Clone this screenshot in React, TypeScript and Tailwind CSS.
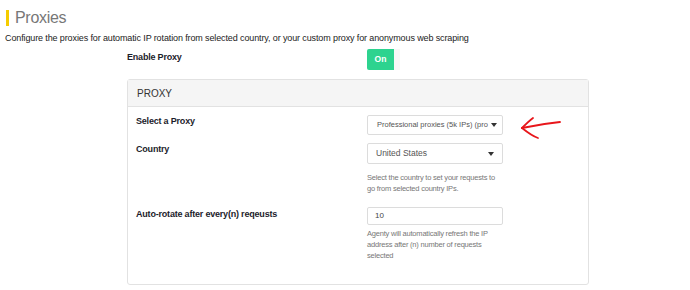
import React from 'react';

function Caret() {
  return (
    <svg width="6" height="4" viewBox="0 0 6 4" className="shrink-0">
      <path d="M0 0 L6 0 L3 4 Z" fill="#333" />
    </svg>
  );
}

// hand-drawn annotation arrow pointing at the proxy select
function RedArrow() {
  return (
    <svg width="46" height="28" viewBox="0 0 46 28" className="absolute left-[151px] top-[-2px]">
      <g stroke="#e8161b" strokeWidth="1.8" fill="none" strokeLinecap="round" strokeLinejoin="round">
        <path d="M42 9 C32 10 18 12 4 15" />
        <path d="M15 5 C11 8 7 12 4 15" />
        <path d="M4 15 C9 19 14 23 20 25" />
      </g>
    </svg>
  );
}

export default function App() {
  return (
    <div className="w-[690px] h-[290px] bg-white font-['Liberation_Sans',Arial,sans-serif] overflow-hidden">
      {/* Page title */}
      <div className="flex items-center pt-[8px] pl-[6px] h-[28px]">
        <div className="w-[3px] h-[16px] bg-[#f5cc00]" />
        <h1 className="ml-[6px] text-[16px] leading-[20px] text-[#777] tracking-[-0.3px]">Proxies</h1>
      </div>
      <p className="pl-[5px] mt-[4px] text-[9px] leading-[12px] text-[#222] tracking-[-0.12px]">
        Configure the proxies for automatic IP rotation from selected country, or your custom proxy for anonymous web scraping
      </p>

      <div className="ml-[127px] w-[462px]">
        {/* Enable proxy */}
        <div className="flex mt-[5px] h-[21px]">
          <div className="w-[240px] pt-[2px] text-[9px] leading-[12px] font-bold text-[#1c1c2b] tracking-[-0.2px]">Enable Proxy</div>
          <div className="flex h-[21px]">
            <div className="w-[27px] bg-[#2dd38f] rounded-l-[2px] text-white text-[8.5px] font-bold flex items-center justify-center">On</div>
            <div className="w-[6px] bg-[#f7f7f7]" />
          </div>
        </div>

        {/* Proxy panel */}
        <div className="mt-[9px] border border-[#e2e2e2] rounded-[3px] h-[206px]">
          <div className="h-[27px] bg-[#f5f5f5] border-b border-[#e2e2e2] pl-[9px] flex items-center text-[10px] text-[#333]">PROXY</div>

          <div className="pl-[8px] pt-[8px]">
            <div className="flex">
              <div className="w-[231px] text-[9px] leading-[12px] font-bold text-[#1c1c2b] tracking-[-0.2px]">Select a Proxy</div>
              <div className="relative">
                <div className="w-[136px] h-[20px] border border-[#dcdcdc] rounded-[2px] flex items-center pl-[9px] pr-[5px] justify-between">
                  <span className="text-[7.5px] text-[#555] whitespace-nowrap">Professional proxies (5k IPs) (pro</span>
                  <Caret />
                </div>
                <RedArrow />
              </div>
            </div>

            <div className="flex mt-[8px]">
              <div className="w-[231px] text-[9px] leading-[12px] font-bold text-[#1c1c2b] tracking-[-0.2px]">Country</div>
              <div className="w-[136px]">
                <div className="h-[21px] border border-[#dcdcdc] rounded-[2px] flex items-center pl-[8px] pr-[8px] justify-between">
                  <span className="text-[8.5px] text-[#555]">United States</span>
                  <Caret />
                </div>
                <p className="mt-[8px] w-[130px] text-[7.5px] leading-[11px] text-[#777] tracking-[-0.2px]">
                  Select the country to set your requests to go from selected country IPs.
                </p>
              </div>
            </div>

            <div className="flex mt-[13px]">
              <div className="w-[231px] text-[9px] leading-[12px] font-bold text-[#1c1c2b] tracking-[-0.2px] pt-[1px]">Auto-rotate after every(n) reqeusts</div>
              <div className="w-[136px]">
                <div className="h-[18px] border border-[#dcdcdc] rounded-[2px] flex items-center pl-[7px] text-[8px] text-[#444]">10</div>
                <p className="mt-[3px] w-[130px] text-[7.5px] leading-[11px] text-[#777] tracking-[-0.2px]">
                  Agenty will automatically refresh the IP address after (n) number of requests selected
                </p>
              </div>
            </div>
          </div>
        </div>
      </div>
    </div>
  );
}
